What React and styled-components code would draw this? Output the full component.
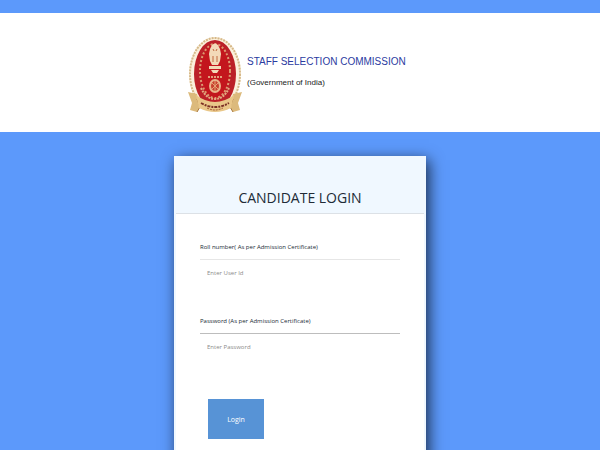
import React from 'react'
import styled, { createGlobalStyle } from 'styled-components'

const fields = [
  {
    id: 'roll',
    type: 'text',
    label: 'Roll number( As per Admission Certificate)',
    placeholder: 'Enter User Id',
    line: '#e6e6e6',
  },
  {
    id: 'password',
    type: 'password',
    label: 'Password (As per Admission Certificate)',
    placeholder: 'Enter Password',
    line: '#bdbdbd',
  },
]

export default function App() {
  return (
    <Page>
      <GlobalStyle />
      <Header>
        <Brand>
          <Emblem />
          <div>
            <BrandName>STAFF SELECTION COMMISSION</BrandName>
            <BrandNote>(Government of India)</BrandNote>
          </div>
        </Brand>
      </Header>
      <Card>
        <CardHeader>
          <CardTitle>CANDIDATE LOGIN</CardTitle>
        </CardHeader>
        <Form onSubmit={e => e.preventDefault()}>
          {fields.map(({ id, type, label, placeholder, line }) => (
            <Field key={id}>
              <Label htmlFor={id} $line={line}>
                {label}
              </Label>
              <Input id={id} type={type} placeholder={placeholder} />
            </Field>
          ))}
          <Button type="submit">Login</Button>
        </Form>
      </Card>
    </Page>
  )
}

function Emblem() {
  return (
    <EmblemSvg width="56" height="80" viewBox="0 0 56 80" aria-hidden="true">
      <ellipse cx="28" cy="39" rx="26" ry="37" fill="#fbf0dc" />
      <ellipse
        cx="28"
        cy="39"
        rx="25"
        ry="36"
        fill="none"
        stroke="#d6b98a"
        strokeWidth="2"
        strokeDasharray="2 1"
      />
      <ellipse cx="28" cy="39" rx="21" ry="34" fill="#bb2028" />
      {/* wreath */}
      <ellipse
        cx="28"
        cy="36"
        rx="15"
        ry="27"
        fill="#c3161d"
        stroke="#dd9a70"
        strokeWidth="2"
        strokeDasharray="2 2"
      />
      {/* lion capital */}
      <g fill="#f3d9b8">
        <path d="M25 10q3-3 6 0l2 4 1 5-1 7-2 4h-6l-2-4-1-7 1-5z" />
        <path d="M22 31h12v3H22zM24 35h8l-2 3h-4z" />
      </g>
      <path
        d="M26 14l1 2m3-2l-1 2M26 21v6m4-6v6"
        stroke="#c0683f"
        strokeWidth="1"
      />
      <path d="M21 42h14" stroke="#e3a07c" strokeWidth="2" strokeDasharray="2 1" />
      <ellipse cx="28" cy="51" rx="5" ry="6" fill="#c9402f" stroke="#eab38a" strokeWidth="2" />
      <path d="M25 48l6 6m0-6l-6 6M28 46v10" stroke="#e2a173" strokeWidth="1" />
      <path
        d="M14 53q5 11 14 11t14-11"
        fill="none"
        stroke="#e3aa80"
        strokeWidth="2"
        strokeDasharray="2 1"
      />
      {/* ribbon */}
      <path d="M1 57l9 2 3 13-3 5-7-2 2-7z" fill="#dcba7c" />
      <path d="M55 57l-9 2-3 13 3 5 7-2-2-7z" fill="#dcba7c" />
      <path d="M10 64l3 8-3 5M46 64l-3 8 3 5" fill="none" stroke="#a87840" />
      <path d="M9 60q19 14 38 0l-3 13q-16 8-32 0z" fill="#e9c789" />
      <path
        d="M14 68q14 8 28 0"
        fill="none"
        stroke="#7c3024"
        strokeWidth="2"
        strokeDasharray="3 1 2 1"
      />
      <path d="M20 73q8 4 16 0" fill="none" stroke="#a3582f" strokeDasharray="2 1" />
    </EmblemSvg>
  )
}

const GlobalStyle = createGlobalStyle`
  * {
    box-sizing: border-box;
  }

  body {
    margin: 0;
    background: #5c99fb;
    font-family: 'Open Sans', sans-serif;
    color: #212b36;
  }
`

const Page = styled.main`
  padding: 13px 0 24px;
`

const Header = styled.header`
  display: flex;
  justify-content: center;
  padding: 22px 0 17px;
  background: #fff;
`

const Brand = styled.div`
  display: flex;
  align-items: flex-start;
  gap: 4px;
  width: 42%;
  padding-left: 13px;
  white-space: nowrap;
  font-family: 'Liberation Sans', sans-serif;
`

const EmblemSvg = styled.svg`
  flex-shrink: 0;
`

const BrandName = styled.div`
  margin-top: 16px;
  font-size: 10px;
  line-height: 22px;
  color: #2b3b9f;
`

const BrandNote = styled.div`
  font-size: 8px;
  line-height: 20px;
  color: #222;
`

const Card = styled.section`
  width: 42%;
  margin: 24px auto 0;
  border: 2px solid #f0f8ff;
  border-top: 0;
  background: #fff;
  box-shadow: 3px 4px 14px rgba(0, 0, 0, 0.7);
`

const CardHeader = styled.div`
  padding: 28px 0 2px;
  border-bottom: 1px solid #dce1e6;
  background: #f0f8ff;
`

const CardTitle = styled.h1`
  margin: 0;
  font-size: 14px;
  font-weight: 400;
  line-height: 27px;
  text-align: center;
`

const Form = styled.form`
  padding: 25px 24px 40px;
`

const Field = styled.div`
  margin-bottom: 28px;
`

const Label = styled.label`
  display: block;
  padding-bottom: 3px;
  border-bottom: 1px solid ${({ $line }) => $line};
  font-size: 6px;
  line-height: 17px;
  white-space: nowrap;
`

const Input = styled.input`
  display: block;
  width: 100%;
  height: 24px;
  margin-top: 1px;
  padding: 0 7px;
  border: 0;
  outline: 0;
  background: transparent;
  font-family: inherit;
  font-size: 6px;

  &::placeholder {
    color: #8a8a8a;
    opacity: 1;
  }
`

const Button = styled.button`
  display: block;
  width: 56px;
  height: 40px;
  margin: 40px 8px 0;
  border: 0;
  background: #5793d6;
  color: #fff;
  font-family: inherit;
  font-size: 7px;
`
